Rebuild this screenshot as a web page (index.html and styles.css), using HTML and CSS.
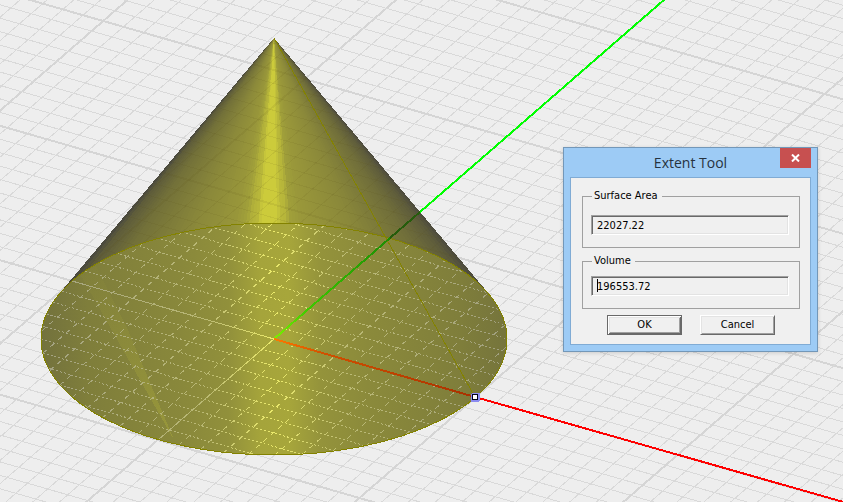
FILE: index.html
```html
<!DOCTYPE html>
<html lang="en">
<head>
    <meta charset="UTF-8">
    <title>Extent Tool</title>
    <link rel="stylesheet" href="styles.css">
</head>
<body>
<svg id="scene" class="scene" role="img" aria-label="Cone in a 3D view">
    <defs>
        <linearGradient id="baseFill" gradientUnits="userSpaceOnUse" x1="42" y1="0" x2="507" y2="0">
            <stop offset="0" stop-color="#73723d"/>
            <stop offset=".1" stop-color="#7f7e3b"/>
            <stop offset=".3" stop-color="#89883b"/>
            <stop offset=".4" stop-color="#91903b"/>
            <stop offset=".47" stop-color="#a5a43b"/>
            <stop offset=".53" stop-color="#a7a63b"/>
            <stop offset=".6" stop-color="#94933b"/>
            <stop offset=".7" stop-color="#8b8a3b"/>
            <stop offset=".9" stop-color="#7f7e3b"/>
            <stop offset="1" stop-color="#75743c"/>
        </linearGradient>
        <linearGradient id="dash" gradientUnits="userSpaceOnUse" x1="42" y1="0" x2="507" y2="0">
            <stop offset="0" stop-color="#a3a283"/>
            <stop offset=".35" stop-color="#bab974"/>
            <stop offset=".5" stop-color="#eceb6c"/>
            <stop offset=".65" stop-color="#bcbb74"/>
            <stop offset="1" stop-color="#a09f80"/>
        </linearGradient>
        <linearGradient id="streakFill" gradientUnits="userSpaceOnUse" x1="0" y1="272" x2="0" y2="440">
            <stop offset="0" stop-color="#a5a43a" stop-opacity=".05"/>
            <stop offset=".45" stop-color="#a5a43a" stop-opacity=".25"/>
            <stop offset="1" stop-color="#a5a43a" stop-opacity=".55"/>
        </linearGradient>
        <linearGradient id="redIn" gradientUnits="userSpaceOnUse" x1="274" y1="0" x2="475" y2="0">
            <stop offset="0" stop-color="#ff7a00"/>
            <stop offset=".25" stop-color="#d05000"/>
            <stop offset="1" stop-color="#a83000"/>
        </linearGradient>
        <linearGradient id="greenIn" gradientUnits="userSpaceOnUse" x1="274" y1="0" x2="390" y2="0">
            <stop offset="0" stop-color="#7cf000"/>
            <stop offset=".3" stop-color="#3cc800"/>
            <stop offset="1" stop-color="#1c8c04"/>
        </linearGradient>
        <clipPath id="baseClip"><ellipse cx="274" cy="339" rx="233" ry="116"/></clipPath>
        <clipPath id="sideClip"><path d="M274 38L59 294H489Z"/></clipPath>
    </defs>
    <g id="grid" class="grid"></g>
    <g id="side" class="side"></g>
    <g id="sideGrid" class="side-grid" clip-path="url(#sideClip)"></g>
    <ellipse class="base" cx="274" cy="339" rx="233" ry="116"/>
    <g clip-path="url(#baseClip)">
        <path class="streak" d="M80 274L96 266L128 330L174 440Z"/>
        <g id="baseGrid" class="base-grid"></g>
        <path class="base-axis" d="M72 281L274 339L158 440"/>
    </g>
    <ellipse class="edge" cx="274" cy="339" rx="233" ry="116"/>
    <path class="edge" d="M274 38L475 397"/>
    <path class="axis green" d="M420 212L665 -1"/>
    <path class="axis green-side" d="M390 238L420 212"/>
    <path class="axis-in green-base" d="M274 339L390 238"/>
    <path class="axis red" d="M475 397L1500 689"/>
    <path class="axis-in red-base" d="M274 339L475 397"/>
    <rect class="halo" x="471" y="393" width="9" height="9" rx="2"/>
    <rect class="handle" x="472.500" y="394.500" width="5" height="5"/>
</svg>

<form class="dialog" onsubmit="return false">
    <header class="titlebar">
        <h1 class="title">Extent Tool</h1>
        <button type="button" class="close" aria-label="Close">
            <svg width="9" height="8" viewBox="0 0 9 8"><path d="M1 0.500L8 7.500M8 0.500L1 7.500"/></svg>
        </button>
    </header>
    <div class="client">
        <fieldset class="group area">
            <legend><label for="area">Surface Area</label></legend>
            <input type="text" id="area" class="field" value="22027.22" readonly>
        </fieldset>
        <fieldset class="group">
            <legend><label for="volume">Volume</label></legend>
            <input type="text" id="volume" class="field caret" value="196553.72" readonly>
        </fieldset>
        <div class="buttons">
            <button type="submit" class="btn default">OK</button>
            <button type="button" class="btn">Cancel</button>
        </div>
    </div>
</form>

<script>
    var NS = 'http://www.w3.org/2000/svg';
    var O = [274, 339];        // origin
    var U = [20.17, 5.8];      // one cell along the red axis
    var V = [11.63, -10.1];    // one cell along the green axis
    var APEX = [274, 38];

    function add(parent, tag, attrs) {
        var el = document.createElementNS(NS, tag);
        for (var k in attrs) el.setAttribute(k, attrs[k]);
        document.getElementById(parent).appendChild(el);
    }
    function pt(u, v) {
        return (O[0] + u * U[0] + v * V[0]).toFixed(1) + ' ' + (O[1] + u * U[1] + v * V[1]).toFixed(1);
    }

    // ground grid, every tenth line is a major one
    for (var i = -80; i <= 80; i++) {
        var cls = i % 10 ? 'minor' : 'major';
        add('grid', 'path', {'class': cls, d: 'M' + pt(-80, i) + 'L' + pt(80, i)});
        add('grid', 'path', {'class': cls, d: 'M' + pt(i, -80) + 'L' + pt(i, 80)});
        if (i > -11 && i < 40) {
            add('sideGrid', 'path', {'class': cls, d: 'M' + pt(-40, i) + 'L' + pt(40, i)});
        }
        if (i > -30 && i < 20) {
            add('sideGrid', 'path', {'class': cls, d: 'M' + pt(i, -20) + 'L' + pt(i, 50)});
        }
        if (i && i > -10 && i < 10) {
            var r = Math.sqrt(100 - i * i);
            add('baseGrid', 'path', {'class': 'along', d: 'M' + pt(-r, i) + 'L' + pt(r, i)});
            add('baseGrid', 'path', {'class': 'across', d: 'M' + pt(i, -r) + 'L' + pt(i, r)});
        }
    }

    // cone side: fan of facets from the apex, shaded by direction
    var stops = [
        [-1, 72, 71, 63], [-.95, 94, 92, 58], [-.82, 114, 112, 57], [-.5, 138, 136, 58], [-.25, 152, 150, 58],
        [-.18, 161, 160, 58], [-.145, 178, 177, 58], [-.1, 186, 185, 58], [-.085, 204, 203, 59],
        [.025, 204, 203, 59], [.035, 186, 185, 58], [.085, 182, 181, 58], [.095, 162, 161, 58],
        [.18, 153, 151, 58], [.5, 137, 135, 58], [.8, 112, 110, 58], [.94, 94, 92, 59], [1, 76, 74, 62]
    ];
    function shade(n) {
        for (var s = 1; s < stops.length - 1 && stops[s][0] < n; s++);
        var a = stops[s - 1], b = stops[s], t = (n - a[0]) / (b[0] - a[0]);
        return 'rgb(' + [1, 2, 3].map(function (c) {
            return Math.round(a[c] + (b[c] - a[c]) * t);
        }).join() + ')';
    }
    var N = 100;
    for (var f = 0; f < N; f++) {
        var n0 = f / N * 2 - 1, n1 = (f + 1) / N * 2 - 1;
        // each facet runs to the right edge, the next one is painted over it
        add('side', 'path', {
            d: 'M' + APEX.join(' ') + 'L' + (274 + 215 * n0) + ' 294H489Z',
            fill: shade((n0 + n1) / 2)
        });
    }
</script>
</body>
</html>
```

FILE: styles.css
```css
body{
    margin: 0;
    height: 100vh;
    position: relative;
    overflow: hidden;
    background-color: #eee;
    font: 11px/14px "DejaVu Sans Condensed", "Noto Sans", sans-serif;
    color: #000;
}
.scene{
    display: block;
    width: 100%;
    height: 100%;
    shape-rendering: crispEdges;
}
.scene path, .edge{
    stroke-width: 1px;
}
.grid path{
    stroke: #d9d9d9;
}
.scene .grid .major{
    stroke: #d5d5d5;
    stroke-width: 2px;
}
.side-grid path{
    stroke: #545018;
    stroke-opacity: .09;
}
.scene .side-grid .major{
    stroke-width: 2px;
}
.base{
    fill: url(#baseFill);
}
.streak{
    fill: url(#streakFill);
}
.base-grid path{
    stroke: url(#dash);
}
.along{
    stroke-dasharray: 2 2;
}
.across{
    stroke-dasharray: 5 5;
}
.base-axis{
    fill: none;
    stroke: url(#dash);
}
.edge{
    fill: none;
    stroke: #838200;
}
.scene .axis{
    stroke-width: 2px;
}
.green{
    stroke: #0f0;
}
.green-side{
    stroke: #265c0c;
}
.green-base{
    stroke: url(#greenIn);
}
.red{
    stroke: #f00;
}
.red-base{
    stroke: url(#redIn);
}
.scene .axis-in{
    stroke-width: 2px;
}
.halo{
    fill: #8c8cf0;
}
.handle{
    fill: #fff;
    stroke: #000018;
    stroke-width: 1px;
}

/* dialog window */
.dialog{
    position: absolute;
    left: 563px;
    top: 147px;
    width: 255px;
    box-sizing: border-box;
    border: 1px solid #7397b8;
    background-color: #9dcbf5;
    box-shadow: 0 1px 4px rgba(0,0,0,.15);
}
.titlebar{
    display: flex;
    justify-content: flex-end;
    height: 29px;
}
.title{
    flex: 1;
    margin: 0;
    padding-left: 37px;
    text-align: center;
    font: 14px/29px "Open Sans", "Noto Sans", sans-serif;
    color: #26323e;
}
.close{
    width: 31px;
    height: 20px;
    margin-right: 6px;
    padding: 0;
    border: 0;
    background-color: #c75050;
    display: flex;
    align-items: center;
    justify-content: center;
}
.close path{
    stroke: #fff;
    stroke-width: 2px;
}
.client{
    margin: 0 6px 6px;
    padding: 11px 10px 9px 11px;
    border: 1px solid #80abd4;
    background-color: #f0f0f0;
}
.group{
    min-width: 0;
    margin: 0 0 6px;
    padding: 8px 10px 12px 8px;
    border: 1px solid #a0a0a0;
}
.area{
    padding-top: 12px;
}
legend{
    margin-left: 1px;
    padding: 0 4px 0 2px;
}
.field{
    display: block;
    box-sizing: border-box;
    width: 100%;
    height: 20px;
    margin: 0;
    padding: 0 5px;
    border: 1px solid;
    border-color: #a0a0a0 #fff #fff #a0a0a0;
    box-shadow: inset 1px 1px #696969, inset -1px -1px #e3e3e3;
    background-color: #f0f0f0;
    font: inherit;
    color: #000;
    outline: none;
}
.caret{
    background-image: linear-gradient(#000, #000);
    background-size: 1px 13px;
    background-position: 5px 2px;
    background-repeat: no-repeat;
}
.buttons{
    display: flex;
    justify-content: center;
    gap: 18px;
}
.btn{
    width: 75px;
    height: 20px;
    padding: 0;
    border: 1px solid;
    border-color: #fff #696969 #696969 #fff;
    box-shadow: inset 1px 1px #e3e3e3, inset -1px -1px #a0a0a0;
    background-color: #f0f0f0;
    font: inherit;
    color: #000;
}
.default{
    border-color: #696969;
    box-shadow: inset 1px 1px #fff, inset -1px -1px #696969, inset 2px 2px #e3e3e3, inset -2px -2px #a0a0a0;
}
```
